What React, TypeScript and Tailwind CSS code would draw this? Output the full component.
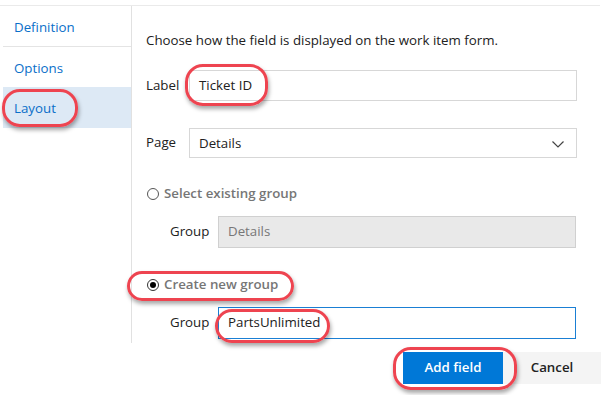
import React from "react";

const font = { fontFamily: '"Open Sans", "Noto Sans", sans-serif' };

function Oval({ className }: { className: string }) {
  return (
    <div
      className={`absolute rounded-[18px] border-[3px] border-[#ee4450] shadow-[1px_3px_4px_rgba(0,0,0,0.35)] pointer-events-none ${className}`}
    />
  );
}

export default function App() {
  return (
    <div className="relative w-[608px] h-[395px] bg-white text-[#212121] overflow-hidden" style={font}>
      <div className="mt-[5px] border-t border-[#eaeaea] flex h-[338px] mr-[8px]">
        <nav className="w-[132px] pl-[3px] border-r border-[#e1e1e1] flex flex-col">
          <div className="h-[41px] flex items-center pt-[4px] pl-[11px] border-b border-[#e4e4e4] text-[13.3px] text-[#0a6fc9]">Definition</div>
          <div className="h-[40px] flex items-center pt-[4px] pl-[11px] text-[13.3px] text-[#0a6fc9]">Options</div>
          <div className="h-[41px] flex items-center pt-[3px] pl-[11px] bg-[#dde9f5] text-[13.3px] text-[#0a6fc9]">Layout</div>
        </nav>
        <div className="flex-1 pl-[14px] flex flex-col text-[13.3px]">
          <div className="h-[26px] mt-[22px] flex items-center text-[#212121]">Choose how the field is displayed on the work item form.</div>
          <div className="flex items-center mt-[16px]">
            <span className="w-[43px]">Label</span>
            <div className="w-[388px] h-[31px] border border-[#d7d7d7] flex items-center pl-[9px]">Ticket ID</div>
          </div>
          <div className="flex items-center mt-[27px]">
            <span className="w-[43px]">Page</span>
            <div className="w-[388px] h-[30px] border border-[#d7d7d7] flex items-center pl-[9px] pt-[2px] justify-between pr-[12px]">
              <span>Details</span>
              <svg width="12" height="7" viewBox="0 0 12 7"><path d="M0.5 0.5 L6 6 L11.5 0.5" fill="none" stroke="#444" strokeWidth="1.2" /></svg>
            </div>
          </div>
          <div className="flex items-center mt-[26px] h-[20px]">
            <span className="w-[12px] h-[12px] rounded-full border border-[#555] ml-[1px]" />
            <span className="ml-[5px] font-semibold text-[#767676]">Select existing group</span>
          </div>
          <div className="flex items-center mt-[12px] ml-[24px]">
            <span className="w-[48px]">Group</span>
            <div className="w-[358px] h-[32px] border border-[#d0d0d0] bg-[#e9e9e9] flex items-center pl-[9px] text-[#777]">Details</div>
          </div>
          <div className="flex items-center mt-[27px] h-[20px]">
            <span className="w-[12px] h-[12px] rounded-full border border-[#333] ml-[1px] flex items-center justify-center">
              <span className="w-[6px] h-[6px] rounded-full bg-black" />
            </span>
            <span className="ml-[5px] font-semibold text-[#767676]">Create new group</span>
          </div>
          <div className="flex items-center mt-[12px] ml-[24px]">
            <span className="w-[48px]">Group</span>
            <div className="w-[358px] h-[32px] border border-[#1a7fd4] flex items-center pl-[9px]">PartsUnlimited</div>
          </div>
        </div>
      </div>
      <div className="flex justify-end mr-[7px] mt-[9px] text-[13.3px]">
        <div className="w-[100px] h-[32px] bg-[#0078d7] text-white font-semibold flex items-center justify-center">Add field</div>
        <div className="w-[98px] h-[32px] bg-[#f4f4f4] text-[#222] font-semibold flex items-center justify-center">Cancel</div>
      </div>
      <Oval className="left-[2px] top-[89px] w-[76px] h-[38px]" />
      <Oval className="left-[185px] top-[64px] w-[83px] h-[42px]" />
      <Oval className="left-[127px] top-[271px] w-[167px] h-[30px]" />
      <Oval className="left-[215px] top-[309px] w-[115px] h-[34px]" />
      <Oval className="left-[393px] top-[347px] w-[124px] h-[43px]" />
    </div>
  );
}
